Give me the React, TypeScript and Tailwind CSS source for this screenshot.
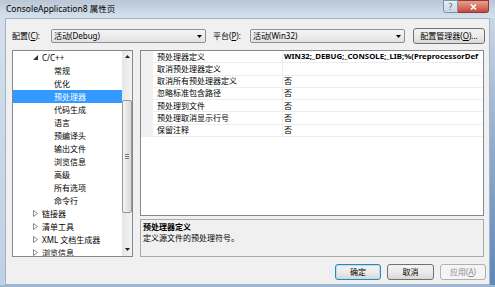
import React from "react";

function U({ children }: { children: React.ReactNode }) {
  return <span className="underline underline-offset-[1px] decoration-[0.5px]">{children}</span>;
}

function DownTri() {
  return (
    <svg width="5" height="3" viewBox="0 0 5 3" className="shrink-0">
      <path d="M0 0H5L2.5 3Z" fill="#000" />
    </svg>
  );
}

function Combo({ text }: { text: string }) {
  return (
    <div className="w-[155px] h-[14px] flex items-center pl-[2px] pr-[3px] border border-[#8e8f8f] rounded-[2px] bg-gradient-to-b from-[#f6f6f6] to-[#e2e2e2]">
      <span className="flex-1 whitespace-nowrap">{text}</span>
      <DownTri />
    </div>
  );
}

function Btn({
  children,
  w,
  kind = "normal",
}: {
  children: React.ReactNode;
  w: string;
  kind?: "normal" | "default" | "disabled";
}) {
  const base = "h-[16px] flex items-center justify-center rounded-[3px] border whitespace-nowrap";
  if (kind === "disabled")
    return (
      <div className={`${base} ${w} border-[#adb2b5] bg-[#f4f4f4] text-[#8d8d8d]`}>{children}</div>
    );
  if (kind === "default")
    return (
      <div
        className={`${base} ${w} border-[#3c7fb1] bg-gradient-to-b from-[#f2f2f2] via-[#ebebeb] to-[#d8d8d8] shadow-[inset_0_0_0_1px_#b6def6]`}
      >
        {children}
      </div>
    );
  return (
    <div className={`${base} ${w} border-[#707070] bg-gradient-to-b from-[#f2f2f2] via-[#ebebeb] to-[#d8d8d8]`}>
      {children}
    </div>
  );
}

const tree: { t: string; lvl: number; exp?: boolean; sel?: boolean }[] = [
  { t: "C/C++", lvl: 0, exp: true },
  { t: "常规", lvl: 1 },
  { t: "优化", lvl: 1 },
  { t: "预处理器", lvl: 1, sel: true },
  { t: "代码生成", lvl: 1 },
  { t: "语言", lvl: 1 },
  { t: "预编译头", lvl: 1 },
  { t: "输出文件", lvl: 1 },
  { t: "浏览信息", lvl: 1 },
  { t: "高级", lvl: 1 },
  { t: "所有选项", lvl: 1 },
  { t: "命令行", lvl: 1 },
  { t: "链接器", lvl: 0 },
  { t: "清单工具", lvl: 0 },
  { t: "XML 文档生成器", lvl: 0 },
  { t: "浏览信息", lvl: 0 },
];

const props: { n: string; v: string; b?: boolean }[] = [
  { n: "预处理器定义", v: "WIN32;_DEBUG;_CONSOLE;_LIB;%(PreprocessorDef", b: true },
  { n: "取消预处理器定义", v: "" },
  { n: "取消所有预处理器定义", v: "否" },
  { n: "忽略标准包含路径", v: "否" },
  { n: "预处理到文件", v: "否" },
  { n: "预处理取消显示行号", v: "否" },
  { n: "保留注释", v: "否" },
];

function Expanded() {
  return (
    <svg width="5" height="5" viewBox="0 0 5 5">
      <path d="M5 0V5H0Z" fill="#333" />
    </svg>
  );
}

function Collapsed() {
  return (
    <svg width="5" height="7" viewBox="0 0 5 7">
      <path d="M0.5 0.5L4.5 3.5L0.5 6.5Z" fill="none" stroke="#8a8a8a" strokeWidth="1" />
    </svg>
  );
}

function ScrollBar() {
  return (
    <div className="w-[10px] h-full flex flex-col bg-gradient-to-r from-[#e6e6e6] to-[#f3f3f3]">
      <div className="h-[15px] flex items-start justify-center pt-[4px]">
        <svg width="5" height="3" viewBox="0 0 5 3">
          <path d="M0 3H5L2.5 0Z" fill="#222" />
        </svg>
      </div>
      <div className="h-[34px]" />
      <div className="h-[113px] rounded-[2px] border border-[#979797] bg-gradient-to-r from-[#f4f4f4] to-[#d9d9d9] flex flex-col items-center justify-center gap-[1px]">
        <div className="w-[4px] h-[1px] bg-[#777]" />
        <div className="w-[4px] h-[1px] bg-[#777]" />
        <div className="w-[4px] h-[1px] bg-[#777]" />
      </div>
      <div className="flex-1" />
      <div className="h-[15px] flex items-end justify-center pb-[5px]">
        <svg width="5" height="3" viewBox="0 0 5 3">
          <path d="M0 0H5L2.5 3Z" fill="#222" />
        </svg>
      </div>
    </div>
  );
}

export default function App() {
  return (
    <div className="w-[495px] h-[287px] overflow-hidden bg-[#8eaacb] font-['Noto_Sans','Noto_Sans_CJK_SC',sans-serif] text-[8px] leading-none text-black">
      {/* title bar */}
      <div className="h-[18px] flex items-start bg-gradient-to-b from-[#b8c6d5] to-[#d6e2ee]">
        <div className="pl-[6px] pt-[5px] text-[8.5px] whitespace-nowrap">ConsoleApplication8 属性页</div>
        <div className="ml-auto mr-[6px] flex">
          <div className="w-[15px] h-[13px] flex items-center justify-center border border-[#7f91a8] rounded-bl-[3px] bg-gradient-to-b from-[#e9eef4] to-[#c9d5e3] text-[8px] text-[#4a5c73]">
            ?
          </div>
          <div className="w-[31px] h-[13px] flex items-center justify-center border border-[#8d3a33] border-l-0 rounded-br-[3px] bg-gradient-to-b from-[#e8a091] to-[#c4493b]">
            <svg width="7" height="6" viewBox="0 0 7 6">
              <path d="M1 0.5L6 5.5M6 0.5L1 5.5" stroke="#fff" strokeWidth="1.6" />
            </svg>
          </div>
        </div>
      </div>

      <div className="flex h-[267px]">
        <div className="w-[5px] bg-gradient-to-b from-[#d3dfeb] to-[#bfd1e4]" />
        {/* dialog client */}
        <div className="w-[485px] h-full bg-[#f0f0f0] border border-[#a3b3c6] pl-[6px] pr-[4px] pt-[10px] flex flex-col">
          {/* config row */}
          <div className="h-[14px] flex items-center">
            <div className="w-[39px] whitespace-nowrap">
              配置(<U>C</U>):
            </div>
            <Combo text="活动(Debug)" />
            <div className="ml-[7px] w-[37px] whitespace-nowrap">
              平台(<U>P</U>):
            </div>
            <Combo text="活动(Win32)" />
            <div className="ml-[8px]">
              <Btn w="w-[72px]">
                配置管理器(<U>O</U>)...
              </Btn>
            </div>
          </div>

          {/* main */}
          <div className="mt-[7px] flex">
            {/* tree */}
            <div className="w-[121px] h-[207px] border border-[#828790] bg-white flex overflow-hidden">
              <div className="flex-1 flex flex-col overflow-hidden">
                {tree.map((r, i) => (
                  <div
                    key={i}
                    className={`h-[13px] shrink-0 flex items-center whitespace-nowrap ${
                      r.sel ? "bg-[#3399ff] text-white" : ""
                    } ${r.lvl === 0 ? "pl-[20px]" : "pl-[41px]"}`}
                  >
                    {r.lvl === 0 && (
                      <div className="w-[9px] flex items-center">{r.exp ? <Expanded /> : <Collapsed />}</div>
                    )}
                    <span>{r.t}</span>
                  </div>
                ))}
              </div>
              <ScrollBar />
            </div>

            {/* right column */}
            <div className="ml-[7px] w-[344px] flex flex-col">
              <div className="h-[166px] border border-[#828790] bg-white overflow-hidden">
                <div className="h-[86px] flex flex-col">
                  {props.map((p, i) => (
                    <div key={i} className="flex-1 min-h-0 flex">
                      <div className="w-[12px] bg-[#f0f0f0]" />
                      <div className="w-[130px] pl-[4px] flex items-center border-b border-r border-[#ededed] whitespace-nowrap">
                        {p.n}
                      </div>
                      <div
                        className={`flex-1 pl-[1px] flex items-center border-b border-[#ededed] whitespace-nowrap overflow-hidden ${
                          p.b ? "font-bold text-[7.8px]" : ""
                        }`}
                      >
                        {p.v}
                      </div>
                    </div>
                  ))}
                </div>
              </div>
              <div className="mt-[3px] h-[38px] border border-[#a9a9a9] bg-[#f0f0f0] pl-[2px] pt-[3px] flex flex-col gap-[3px]">
                <div className="font-bold">预处理器定义</div>
                <div>定义源文件的预处理符号。</div>
              </div>
            </div>
          </div>

          {/* buttons */}
          <div className="mt-[7px] -mr-[1px] flex justify-end gap-[6px]">
            <Btn w="w-[46px]" kind="default">
              确定
            </Btn>
            <Btn w="w-[47px]">取消</Btn>
            <Btn w="w-[46px]" kind="disabled">
              应用(<U>A</U>)
            </Btn>
          </div>
        </div>
        <div className="flex-1 bg-gradient-to-b from-[#c9d6e4] via-[#8fabcb] to-[#5f88b8]" />
      </div>
      <div className="h-[2px] bg-[#9db6d3]" />
    </div>
  );
}
